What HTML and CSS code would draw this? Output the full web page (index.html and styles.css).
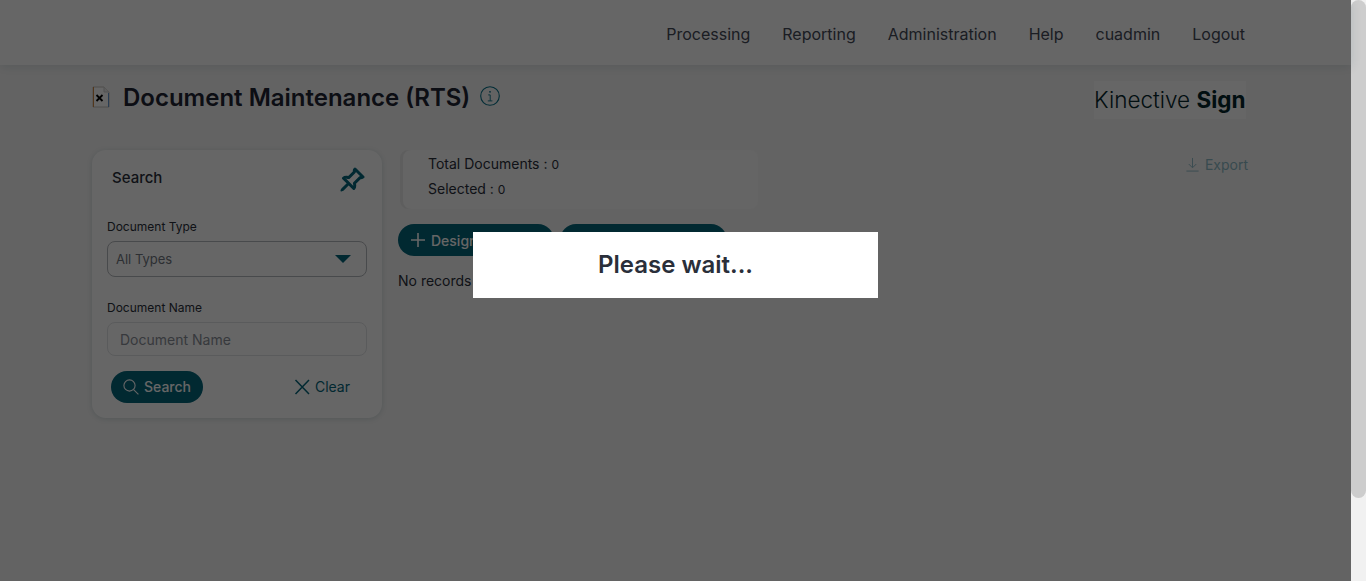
FILE: index.html
```html
<!DOCTYPE html>
<html lang="en">
<head>
    <meta charset="UTF-8">
    <meta name="viewport" content="width=device-width, initial-scale=1.0">
    <title>Document Maintenance (RTS)</title>
    <link rel="stylesheet" href="styles.css">
</head>
<body>
    <div class="window">
        <div class="page">
            <header class="topbar">
                <nav class="nav">
                    <a href="#">Processing</a>
                    <a href="#">Reporting</a>
                    <a href="#">Administration</a>
                    <a href="#">Help</a>
                    <a href="#">cuadmin</a>
                    <a href="#">Logout</a>
                </nav>
            </header>

            <div class="content">
                <div class="title-row">
                    <div class="title">
                        <svg class="doc-icon" viewBox="0 0 18 22" width="18" height="22">
                            <path d="M1 1h11l5 5v15H1z" fill="#fff" stroke="#c4c0bc" stroke-width="1"/>
                            <path d="M1.5 1v20" stroke="#d08a48" stroke-width="1"/>
                            <path d="M16.5 7v14" stroke="#6a98d0" stroke-width="1"/>
                            <path d="M12 1v5h5" fill="#eee" stroke="#ccc" stroke-width="1"/>
                            <path d="M4.5 9l6 6M10.5 9l-6 6" stroke="#000" stroke-width="1.8"/>
                        </svg>
                        <h1>Document Maintenance (RTS)</h1>
                        <svg class="info-icon" viewBox="0 0 20 20" width="20" height="20">
                            <circle cx="10" cy="10" r="9.3" fill="none" stroke="currentColor" stroke-width="1.1"/>
                            <circle cx="10" cy="5.8" r="0.9" fill="currentColor"/>
                            <path d="M8.2 8.9h2v5.9M7.8 14.9h4.6" fill="none" stroke="currentColor" stroke-width="0.9"/>
                        </svg>
                    </div>
                    <div class="logo">Kinective <b>Sign</b></div>
                </div>

                <div class="columns">
                    <aside class="search-card">
                        <div class="search-head">
                            <h2>Search</h2>
                            <svg class="pin-icon" viewBox="0 0 16 16" width="26" height="26">
                                <path d="M9.828.722a.5.5 0 0 1 .354.146l4.95 4.95a.5.5 0 0 1 0 .707c-.48.48-1.072.588-1.503.588-.177 0-.335-.018-.46-.039l-3.134 3.134a5.927 5.927 0 0 1 .16 1.013c.046.702-.032 1.687-.72 2.375a.5.5 0 0 1-.707 0l-2.829-2.828-3.182 3.182c-.195.195-1.219.902-1.414.707-.195-.195.512-1.22.707-1.414l3.182-3.182-2.828-2.829a.5.5 0 0 1 0-.707c.688-.688 1.673-.767 2.375-.72a5.922 5.922 0 0 1 1.013.16l3.134-3.133a2.772 2.772 0 0 1-.04-.461c0-.43.108-1.022.589-1.503a.5.5 0 0 1 .353-.146zm.122 2.112v-.002.002zm0-.002v.002a.5.5 0 0 1-.122.51L6.293 6.878a.5.5 0 0 1-.511.12H5.78l-.014-.004a4.507 4.507 0 0 0-.288-.076 4.922 4.922 0 0 0-.765-.116c-.422-.028-.836.008-1.175.15l5.51 5.509c.141-.34.177-.753.149-1.175a4.924 4.924 0 0 0-.192-1.054l-.004-.013v-.001a.5.5 0 0 1 .12-.512l3.536-3.535a.5.5 0 0 1 .532-.115l.096.022c.087.017.208.034.344.034.114 0 .23-.011.343-.04L9.927 2.028c-.029.113-.04.23-.04.343a1.779 1.779 0 0 0 .062.46z" fill="currentColor" stroke="currentColor" stroke-width="0.8"/>
                            </svg>
                        </div>

                        <label class="field-label">Document Type</label>
                        <div class="select-box">
                            <span>All Types</span>
                            <span class="caret"></span>
                        </div>

                        <label class="field-label second">Document Name</label>
                        <div class="text-box">Document Name</div>

                        <div class="search-actions">
                            <button class="pill small">
                                <svg viewBox="0 0 16 16" width="16" height="16">
                                    <circle cx="6.5" cy="6.5" r="5.6" fill="none" stroke="currentColor" stroke-width="1.1"/>
                                    <path d="M10.6 10.6l4.8 4.8" stroke="currentColor" stroke-width="1.1"/>
                                </svg>
                                Search
                            </button>
                            <button class="clear-btn">
                                <svg viewBox="0 0 16 16" width="16" height="16">
                                    <path d="M1.5 1l13.5 14M15 1L1.5 15" stroke="currentColor" stroke-width="1.5"/>
                                </svg>
                                Clear
                            </button>
                        </div>
                    </aside>

                    <main class="results">
                        <div class="results-top">
                            <div class="stats">
                                <p>Total Documents : <span>0</span></p>
                                <p>Selected : <span>0</span></p>
                            </div>
                            <a class="export" href="#">
                                <svg viewBox="0 0 16 16" width="15" height="15">
                                    <path d="M8 1v10M4 7.5L8 11.5l4-4M1.5 15h13" fill="none" stroke="currentColor" stroke-width="1"/>
                                </svg>
                                Export
                            </a>
                        </div>
                        <div class="actions">
                            <button class="pill design">
                                <svg viewBox="0 0 16 16" width="16" height="16">
                                    <path d="M8 1v14M1 8h14" stroke="currentColor" stroke-width="1.6"/>
                                </svg>
                                Design Document
                            </button>
                            <button class="pill upload">Upload Document</button>
                        </div>
                        <p class="empty">No records found.</p>
                    </main>
                </div>
            </div>

            <div class="overlay"></div>
            <div class="wait-box">Please wait...</div>
        </div>
        <div class="scrollbar"><div class="thumb"></div></div>
    </div>
</body>
</html>
```
FILE: styles.css
```css
* {
    box-sizing: border-box;
}

html, body {
    height: 100%;
    margin: 0;
    overflow: hidden;
}

body {
    font-family: 'Inter', 'Liberation Sans', sans-serif;
    color: #2a2f3a;
    background-color: #fff;
}

.window {
    display: flex;
    height: 100%;
}

.page {
    position: relative;
    flex: 1;
    background-color: #f8f8f8;
}

.topbar {
    display: flex;
    justify-content: flex-end;
    align-items: center;
    height: 65px;
    padding: 2px 106px 0 0;
    background-color: #fff;
    box-shadow: 0 2px 10px rgba(0, 60, 70, 0.12);
}

.nav {
    display: flex;
    gap: 32px;
}

.nav a {
    color: #444a58;
    font-size: 16px;
    text-decoration: none;
}

.content {
    padding: 16px 105px 0 92px;
}

.title-row {
    display: flex;
    justify-content: space-between;
    height: 69px;
}

.title {
    display: flex;
    align-items: center;
    height: 32px;
    color: #1f2433;
}

.doc-icon {
    margin-right: 13px;
}

.title h1 {
    margin: 0 10px 0 0;
    font-size: 24px;
    font-weight: 600;
}

.info-icon {
    color: #056f87;
    margin-top: -2px;
}

.logo {
    width: 152px;
    height: 38px;
    line-height: 38px;
    font-size: 22.5px;
    font-weight: 300;
    white-space: nowrap;
    color: #04262c;
    background-color: #fff;
}

.logo b {
    font-weight: 700;
}

.columns {
    display: flex;
    gap: 16px;
    align-items: flex-start;
}

.search-card {
    width: 290px;
    height: 268px;
    padding: 0 15px;
    background-color: #fff;
    border-radius: 14px;
    box-shadow: 0 1px 6px rgba(0, 60, 70, 0.16);
}

.search-head {
    display: flex;
    justify-content: space-between;
    align-items: center;
    height: 54px;
    padding: 0 2px 0 5px;
}

.search-head .pin-icon {
    margin-top: 5px;
}

.search-head h2 {
    margin: 0;
    font-size: 15px;
    font-weight: 500;
}

.pin-icon {
    color: #04667c;
}

.field-label {
    display: block;
    margin: 15px 0 6px;
    font-size: 12px;
    line-height: 16px;
    font-weight: 400;
}

.field-label.second {
    margin: 23px 0 6px;
}

.select-box {
    display: flex;
    justify-content: space-between;
    align-items: center;
    height: 36px;
    padding: 0 15px 0 8px;
    font-size: 13px;
    color: #707680;
    border: 1px solid #b5b8bd;
    border-radius: 8px;
}

.caret {
    width: 0;
    height: 0;
    border-left: 8px solid transparent;
    border-right: 8px solid transparent;
    border-top: 8px solid #04667c;
}

.text-box {
    height: 34px;
    padding: 0 12px;
    line-height: 34px;
    font-size: 14px;
    color: #8a8f98;
    border: 1px solid #e2e4e7;
    border-radius: 8px;
}

.search-actions {
    display: flex;
    justify-content: space-between;
    align-items: center;
    margin-top: 15px;
    padding: 0 17px 0 4px;
}

.pill {
    display: flex;
    align-items: center;
    gap: 5px;
    height: 32px;
    border: none;
    border-radius: 16px;
    color: #fff;
    font-family: inherit;
    font-size: 14px;
    font-weight: 500;
    background-color: #04667c;
}

.pill.small {
    width: 92px;
    padding: 0 0 1px 12px;
}

.clear-btn {
    display: flex;
    align-items: center;
    gap: 5px;
    padding: 0 0 1px;
    border: none;
    background: none;
    color: #04667c;
    font-family: inherit;
    font-size: 14px;
}

.results {
    flex: 1;
}

.results-top {
    display: flex;
    justify-content: space-between;
    margin-right: -2px;
}

.stats {
    width: 358px;
    height: 59px;
    margin-left: 2px;
    padding: 1px 0 0 28px;
    font-size: 14px;
    border-radius: 8px;
    background-color: #fcfcfc;
    box-shadow: inset 3px 0 0 #ebebeb;
}

.stats p {
    margin: 0;
    line-height: 25px;
    height: 25px;
}

.stats span {
    font-size: 12px;
}

.export {
    display: flex;
    align-items: center;
    gap: 5px;
    height: 30px;
    margin-top: -1px;
    color: #8cbac6;
    font-size: 14px;
    text-decoration: none;
}

.actions {
    display: flex;
    gap: 6px;
    margin-top: 15px;
}

.pill.design {
    width: 156px;
    padding: 0 0 0 12px;
}

.pill.upload {
    width: 167px;
    padding: 0 0 0 20px;
}

.empty {
    margin: 16px 0 0;
    font-size: 14px;
    line-height: 18px;
}

.overlay {
    position: absolute;
    top: 0;
    left: 0;
    right: 0;
    bottom: 0;
    background-color: rgba(0, 0, 0, 0.6);
}

.wait-box {
    position: absolute;
    top: 40%;
    left: 35%;
    width: 30%;
    height: 66px;
    line-height: 66px;
    text-align: center;
    font-size: 24px;
    font-weight: 600;
    color: #2a2f3a;
    background-color: #fff;
}

.scrollbar {
    width: 15px;
    background-color: #f1f1f1;
}

.thumb {
    height: 498px;
    background-color: #cdcdcd;
    border-radius: 8px;
}
```
